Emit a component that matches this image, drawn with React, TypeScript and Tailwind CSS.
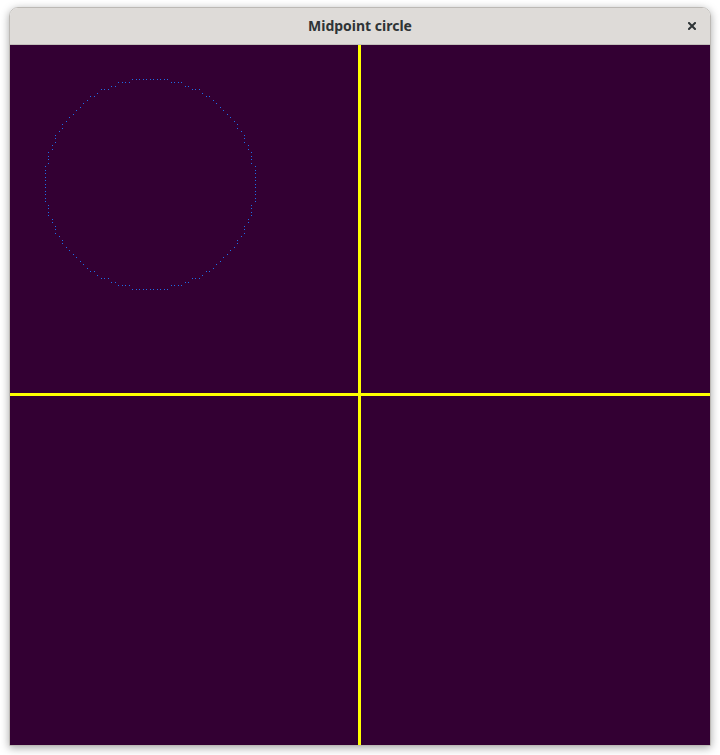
import React from "react";

function circlePoints(cx: number, cy: number, r: number): [number, number][] {
  const pts: [number, number][] = [];
  let x = 0;
  let y = r;
  let d = 1 - r;
  while (x <= y) {
    const sym: [number, number][] = [
      [x, y], [y, x], [-x, y], [-y, x], [x, -y], [y, -x], [-x, -y], [-y, -x],
    ];
    for (const [a, b] of sym) pts.push([cx + a, cy + b]);
    if (d < 0) {
      d += 2 * x + 3;
    } else {
      d += 2 * (x - y) + 5;
      y -= 1;
    }
    x += 1;
  }
  return pts;
}

const S = 3.5;

export default function App() {
  const pts = circlePoints(40, 40, 30);
  const seen = new Set<string>();
  const rects: React.ReactNode[] = [];
  for (const [px, py] of pts) {
    const sx = Math.floor(px * S);
    const sy = Math.floor(py * S) - 1;
    const k = sx + "," + sy;
    if (seen.has(k)) continue;
    seen.add(k);
    rects.push(<rect key={k} x={sx} y={sy} width={1} height={1} fill="#1f6ee8" />);
  }
  return (
    <div className="w-[720px] h-[755px] bg-white pt-[7px] pl-[9px] overflow-hidden">
      <div className="w-[702px] border border-[#bcb9b5] rounded-t-[9px] shadow-[0_2px_8px_rgba(0,0,0,0.35)] overflow-hidden">
        <div className="relative h-[37px] bg-[#dedbd8] border-b border-[#c2bfbb] flex items-center justify-center">
          <span
            className="text-[14px] font-bold text-[#2e3436] leading-none"
            style={{ fontFamily: '"Noto Sans", "DejaVu Sans", sans-serif' }}
          >
            Midpoint circle
          </span>
          <div className="absolute right-[14px] top-[14px] w-[8px] h-[8px]">
            <svg width="8" height="8" viewBox="0 0 8 8">
              <path d="M1 1 L7 7 M7 1 L1 7" stroke="#2e3436" strokeWidth="2" strokeLinecap="square" />
            </svg>
          </div>
        </div>
        <div className="relative w-[700px] h-[700px] bg-[#330033]">
          <svg className="absolute inset-0" width="700" height="700" shapeRendering="crispEdges">
            {rects}
            <rect x={348} y={0} width={3} height={700} fill="#ffff00" />
            <rect x={0} y={348} width={700} height={3} fill="#ffff00" />
          </svg>
        </div>
      </div>
    </div>
  );
}
